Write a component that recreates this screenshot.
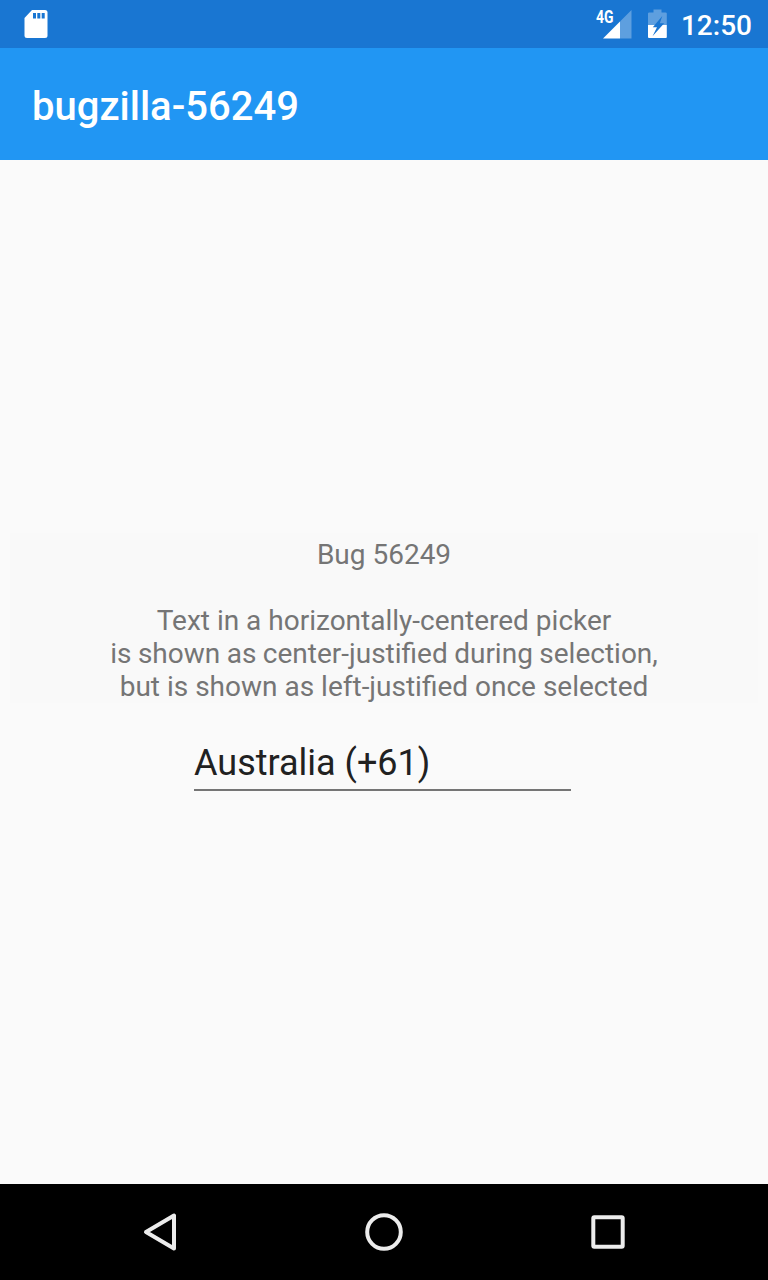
<main class="screen">
  <header class="status">
    <svg class="sd" width="24" height="30" viewBox="0 0 24 30"><path fill="#fff" d="M8 0H21Q23.500 0 23.500 2.500V25.500Q23.500 28 21 28H3Q.500 28 .500 25.500V8Z"/><path fill="#1976d2" d="M9 3h3v5.500h-3zM13.300 3h3v5.500h-3zM17.700 3h3v5.500h-3z"/></svg>
    <div class="right">
      <svg width="38" height="34" viewBox="0 0 38 34"><path fill="#fff" opacity=".3" d="M35.500 3V31.500H24V14.500Z"/><path fill="#fff" d="M24 14.500V31.500H7Z"/><text x="0" y="16" class="net" textLength="17.500" lengthAdjust="spacingAndGlyphs">4G</text></svg>
      <svg class="battery" width="20" height="30" viewBox="0 0 20 30"><path fill="#fff" opacity=".3" d="M6.500 -.500h8v3h4q1.300 0 1.300 1V15H1V3.500q0-1 1.300-1h4.200z"/><path fill="#fff" d="M1 15h18.800v12q0 1-1 1H2q-1 0-1-1z"/><path fill="#1976d2" d="M15.300 6L5.800 17.300H10L5.500 26.300L17.200 13.300H12.800Z"/></svg>
      <span class="time">12:50</span>
    </div>
  </header>
  <header class="bar"><h1>bugzilla-56249</h1></header>
  <section class="content">
    <p>Bug 56249<br /><br />Text in a horizontally-centered picker<br /><span class="tight">is shown as center-justified during selection,</span><br />but is shown as left-justified once selected</p>
    <div class="picker">Australia (+61)</div>
  </section>
  <nav>
    <svg viewBox="0 0 48 48"><path d="M38 7.500V40.500L10 24Z"/></svg>
    <svg viewBox="0 0 48 48"><circle cx="24" cy="24" r="16.800"/></svg>
    <svg viewBox="0 0 48 48"><rect x="9.300" y="9.300" width="29.400" height="29.400" rx="1"/></svg>
  </nav>
</main>

<style>
  :global(body) { margin: 0; }
  .screen { width: 768px; height: 1280px; display: flex; flex-direction: column; background: #fafafa; font-family: Roboto, sans-serif; overflow: hidden; }
  .status { height: 48px; flex: none; box-sizing: border-box; padding: 0 16px 0 24px; background: #1976d2; display: flex; justify-content: space-between; align-items: flex-start; color: #fff; }
  .sd { margin-top: 10px; }
  .right { display: flex; }
  .right svg { margin-top: 7px; overflow: visible; }
  .net { font: 700 17.500px Roboto, sans-serif; fill: #fff; }
  .right .battery { margin: 10px 14px 0 13px; }
  .time { font-size: 28px; font-weight: 500; line-height: 52px; }
  .bar { height: 112px; flex: none; background: #2196f3; color: #fff; }
  h1 { margin: 0; padding-left: 32px; font-size: 40px; font-weight: 500; line-height: 118px; }
  .content { flex: 1; padding-top: 373px; display: flex; flex-direction: column; align-items: center; }
  p { margin: 0; width: 748px; padding-top: 5px; background: #f9f9f9; font-size: 28px; line-height: 33px; color: #757575; text-align: center; white-space: nowrap; }
  .tight { word-spacing: -.5px; }
  .picker { width: 377px; margin: 38px 3px 0 0; height: 48px; line-height: 44px; border-bottom: 2px solid #757575; font-size: 36px; color: #212121; }
  nav { height: 96px; flex: none; background: #000; display: flex; align-items: center; justify-content: center; gap: 176px; }
  nav svg { width: 48px; height: 48px; fill: none; stroke: #ececec; stroke-width: 4; stroke-linejoin: round; }
</style>
